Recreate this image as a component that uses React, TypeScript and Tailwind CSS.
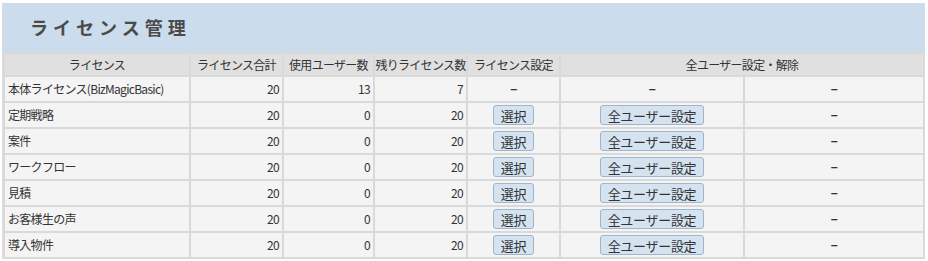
const rows = [
  { name: "定期戦略", total: 20, used: 0, left: 20 },
  { name: "案件", total: 20, used: 0, left: 20 },
  { name: "ワークフロー", total: 20, used: 0, left: 20 },
  { name: "見積", total: 20, used: 0, left: 20 },
  { name: "お客様生の声", total: 20, used: 0, left: 20 },
  { name: "導入物件", total: 20, used: 0, left: 20 },
];

const td = "border-2 border-[#d9d9d9] px-[3px] h-[26px] whitespace-nowrap overflow-hidden";
const th = "border-2 border-[#d9d9d9] font-normal h-[23px] whitespace-nowrap overflow-hidden";
const btn =
  "h-[20px] px-[7px] rounded-[3px] border border-[#9fb5cc] bg-[#d5e3f1] text-[13px] tracking-[-0.3px] leading-none text-[#333] align-middle";
const dash = "−";

const App = () => {
  return (
    <div className="w-[928px] h-[261px] bg-white pt-[3px] font-['Noto_Sans_CJK_JP','Open_Sans',sans-serif] text-[#333]">
      <div className="w-[923px] ml-[2px] border-l border-[#dcdcdc] bg-[#f4f4f4]">
        <div className="h-[49px] bg-[#cbdcec] flex items-center pl-[27px]">
          <h1 className="text-[18px] font-bold tracking-[5px] text-[#4a4a4a]">ライセンス管理</h1>
        </div>
        <table className="w-full table-fixed border-collapse text-[12px] tracking-[-0.7px] leading-[16px]">
          <colgroup>
            <col className="w-[186px]" />
            <col className="w-[93px]" />
            <col className="w-[91px]" />
            <col className="w-[93px]" />
            <col className="w-[93px]" />
            <col className="w-[184px]" />
            <col />
          </colgroup>
          <thead>
            <tr className="bg-[#e0e0e0]">
              <th className={th}>ライセンス</th>
              <th className={th}>ライセンス合計</th>
              <th className={th}>使用ユーザー数</th>
              <th className={th}>残りライセンス数</th>
              <th className={th}>ライセンス設定</th>
              <th className={th} colSpan={2}>全ユーザー設定・解除</th>
            </tr>
          </thead>
          <tbody>
            <tr>
              <td className={`${td} h-[23px]`}>本体ライセンス(BizMagicBasic)</td>
              <td className={`${td} h-[23px] text-right`}>20</td>
              <td className={`${td} h-[23px] text-right`}>13</td>
              <td className={`${td} h-[23px] text-right`}>7</td>
              <td className={`${td} h-[23px] text-center font-bold`}>{dash}</td>
              <td className={`${td} h-[23px] text-center font-bold`}>{dash}</td>
              <td className={`${td} h-[23px] text-center font-bold`}>{dash}</td>
            </tr>
            {rows.map((r) => (
              <tr key={r.name}>
                <td className={td}>{r.name}</td>
                <td className={`${td} text-right`}>{r.total}</td>
                <td className={`${td} text-right`}>{r.used}</td>
                <td className={`${td} text-right`}>{r.left}</td>
                <td className={`${td} text-center`}>
                  <button className={btn}>選択</button>
                </td>
                <td className={`${td} text-center`}>
                  <button className={btn}>全ユーザー設定</button>
                </td>
                <td className={`${td} text-center font-bold`}>{dash}</td>
              </tr>
            ))}
          </tbody>
        </table>
      </div>
    </div>
  );
};

export default App;
